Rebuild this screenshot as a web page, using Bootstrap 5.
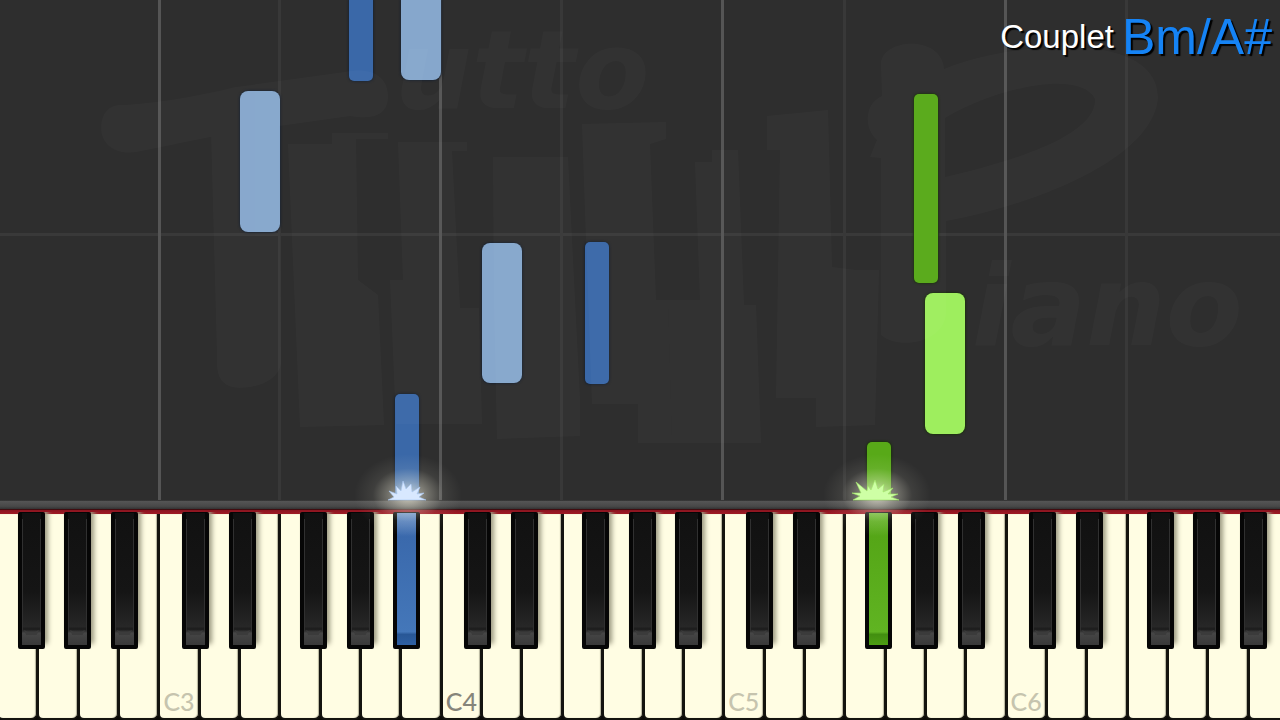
<!DOCTYPE html>
<html lang="en">
<head>
<meta charset="utf-8">
<meta name="viewport" content="width=device-width, initial-scale=1">
<title>Tutto Piano</title>
<link href="https://cdn.jsdelivr.net/npm/bootstrap@5.3.0/dist/css/bootstrap.min.css" rel="stylesheet">
<style>
  body { background: #2e2e2e; font-family: "Liberation Sans", Arial, sans-serif; }
  .roll { background: #2e2e2e; min-height: 300px; }
  .beat { top: 46.6%; height: 3px; background: #393939; }
  .lane { width: 3px; margin-left: -1px; background: #383838; }
  .lane.octave { width: 3px; margin-left: -1px; background: #555; }
  .note { border-radius: 8px; box-shadow: 0 0 2px 1px #1c2430; }
  .note.sharp { border-radius: 5px; }
  .note.cut-top { border-top-left-radius: 0; border-top-right-radius: 0; }
  .note.cut-bottom { border-bottom-left-radius: 0; border-bottom-right-radius: 0; }
  .left-hand { background: #86a7cc; }
  .left-hand.sharp { background: #3a68a8; }
  .right-hand { background: #9eee5e; box-shadow: 0 0 2px 1px #1d3010; }
  .right-hand.sharp { background: #58a918; }
  .chord { text-shadow: 2px 2px 1px #000; padding-top: 9px; }
  .part-name { font-size: 33px; line-height: 40px; color: #fff; }
  .chord-name { font-size: 50px; line-height: 56px; color: #1583f5; }
  .spark { width: 140px; height: 110px; margin-left: -70px; bottom: -36px; z-index: 4; pointer-events: none; }
  .rail { height: 9px; background: linear-gradient(#252525, #545454 15%, #484848 70%, #333); }
  .felt { height: 5px; background: linear-gradient(#1b0808, #8c1520 30%, #a01a25); }
  .keys { height: 206px; background: #0c0c08; }
  .white-keys { width: calc(100% + 11px); margin-left: -3px; }
  .white-key { flex: 1 1 0; min-width: 0; border: 1px solid #14140f; border-width: 0 1px 2px 2px; border-radius: 0 0 6px 6px; padding: 0 0 1px 3px; background: #fffde3; box-shadow: inset -1px 0 1px #b5b39c; font: 500 25px/32px Lato, sans-serif; color: #c6c4ae; }
  .white-key.middle { color: #86857a; }
  .black-key { top: -2px; width: 2.1%; height: 137px; border: solid #060606; border-width: 1px 4px 4px; border-radius: 2px; background: linear-gradient(#111, #151515 60%, #272727 86%, #1b1b1b 88%, #464646 91%, #393939); box-shadow: 3px -5px 5px #9b9981; clip-path: inset(0 -10px -1px -1px); z-index: 2; }
  .black-key::before { content: ""; position: absolute; inset: 6px 0 14px; border: 1px solid #303030; border-width: 0 1px; }
  .black-key::after { content: ""; position: absolute; left: 2px; right: 2px; bottom: 10px; height: 5px; background: #3b3b3b; clip-path: polygon(0 0, 25% 35%, 75% 35%, 100% 0, 85% 100%, 15% 100%); }
  .black-key.down-left { background: linear-gradient(#6b91c7, #3a69ac 18%, #4477b9 90%, #285796 92%, #2f60a2); box-shadow: none; }
  .black-key.down-right { background: linear-gradient(#69b52f, #55a617 18%, #60b422 90%, #428f10 92%, #4c9d13); box-shadow: none; }
  .down-left::before, .down-left::after, .down-right::before, .down-right::after { display: none; }
</style>
</head>
<body>
<main class="d-flex flex-column vh-100 overflow-hidden">
  <section class="roll position-relative flex-grow-1" id="roll" aria-label="Falling notes">
    <div class="beat position-absolute start-0 end-0"></div>
    <div id="notes"></div>
    <svg class="position-absolute top-0 start-0 w-100 h-100" viewBox="0 0 1280 500" aria-hidden="true" style="z-index:2">
      <g opacity=".018" fill="#fff" stroke-linecap="round" stroke-linejoin="round">
        <path d="M118 105C150 104 190 98 235 87L345 72C373 66 389 78 388 98C387 115 373 120 350 116L279 126L281 364C278 380 258 388 239 388C222 387 216 377 217 360L211 137L137 152C117 156 101 145 101 128C101 114 108 106 118 105Z"/>
        <path d="M288 144H332V133H388V139H356L358 280L378 295L384 425L300 427Z"/>
        <path d="M398 142H467V151H452L460 308H479L482 424H396L390 280H403Z"/>
        <path d="M493 157H568L572 240L580 400V436L497 439L494 308Z"/>
        <path d="M582 124L666 122V139L650 144L656 300H668L672 443H638V404H592L586 240Z"/>
        <path d="M695 162H712V150H738L744 305H756L761 443H672L668 300H700Z"/>
        <path d="M767 116L828 110L832 267L856 270H879L875 425L816 427V398H776L780 150H767Z"/>
        <path fill-rule="evenodd" d="M881 65C880 38 942 34 944 69C1010 42 1158 28 1158 98C1153 158 1038 204 946 221V312C946 342 900 351 881 335V158L870 157L877 140C863 128 865 103 882 96ZM945 118V177C1010 162 1097 136 1095 99C1081 69 997 87 945 118Z"/>
        <text x="395" y="108" font-family="DejaVu Sans" font-weight="bold" font-style="italic" font-size="108">utto</text>
        <text x="972" y="345" font-family="DejaVu Sans" font-weight="bold" font-style="italic" font-size="112">iano</text>
      </g>
    </svg>
    <header class="chord position-absolute top-0 end-0 d-flex align-items-center gap-2 pe-2" style="z-index:3">
      <span class="part-name">Couplet</span><span class="chord-name">Bm/A#</span>
    </header>
  </section>
  <div class="rail flex-shrink-0 position-relative"></div>
  <div class="felt flex-shrink-0"></div>
  <section class="keys position-relative flex-shrink-0" id="keys" aria-label="Piano keyboard">
    <div class="white-keys d-flex h-100" id="whites"></div>
  </section>
</main>
<script src="https://cdn.jsdelivr.net/npm/bootstrap@5.3.0/dist/js/bootstrap.bundle.min.js"></script>
<script>
  // Horizontal values use a 1280-unit keyboard, vertical ones a 500-unit time window.
  const px = v => v / 12.8 + '%', py = v => v / 5 + '%';
  const roll = document.getElementById('roll'), keys = document.getElementById('keys');
  const add = (parent, tag, cls) => {
    const el = document.createElement(tag);
    el.className = cls;
    return parent.appendChild(el);
  };

  [[159, 1], [279, 0], [440, 1], [561, 0], [722, 1], [844, 0], [1005, 1], [1126, 0]].forEach(([x, octave]) => {
    const lane = add(document.getElementById('notes'), 'div', 'lane position-absolute top-0 bottom-0' + (octave ? ' octave' : ''));
    lane.style.left = px(x);
  });

  [
    [349, 0, 24, 81, 'left-hand sharp cut-top'], [401, 0, 40, 80, 'left-hand cut-top'],
    [240, 91, 40, 141, 'left-hand'], [482, 243, 40, 140, 'left-hand'],
    [585, 242, 24, 142, 'left-hand sharp'], [395, 394, 24, 106, 'left-hand sharp cut-bottom'],
    [914, 94, 24, 189, 'right-hand sharp'], [925, 293, 40, 141, 'right-hand'],
    [867, 442, 24, 58, 'right-hand sharp cut-bottom']
  ].forEach(([x, y, w, h, kind]) => {
    const n = add(document.getElementById('notes'), 'div', 'note position-absolute ' + kind);
    Object.assign(n.style, { left: px(x), top: py(y), width: px(w), height: py(h) });
  });

  // Bursts where a note meets its key
  [[407, '#d8e8ff', '#a9c8f2', 'b', 'M51 74L57 71L52 65L60 68L59 60L64 65L66 55L69 63L74 58L75 66L83 61L80 68L87 67L82 71L89 74Z'],
   [876, '#ceffa5', '#9fe566', 'g', 'M47 74L54 70L46 67L55 67L50 56L61 65L62 60L65 64L69 54L72 63L78 58L77 66L87 62L82 68L92 68L85 71L93 74Z']
  ].forEach(([x, core, edge, id, d]) => {
    const s = add(roll, 'div', 'spark position-absolute');
    s.style.left = px(x);
    s.innerHTML = `<svg viewBox="0 0 140 110" width="140" height="110" class="d-block" aria-hidden="true">
      <defs><radialGradient id="glow-${id}"><stop offset="0" stop-color="#fffce8" stop-opacity=".72"/><stop offset=".35" stop-color="#fffce8" stop-opacity=".34"/><stop offset=".65" stop-color="#fffce8" stop-opacity=".08"/><stop offset="1" stop-color="#fffce8" stop-opacity="0"/></radialGradient></defs>
      <ellipse cx="71" cy="69" rx="54" ry="41" fill="url(#glow-${id})"/>
      <path d="${d}" fill="${core}" stroke="${edge}" stroke-width=".6"/></svg>`;
  });

  const names = 'FGABCDE';
  let octave = 2;
  for (let i = 0; i < 32; i++) {
    const name = names[i % 7];
    const k = add(document.getElementById('whites'), 'button', 'white-key d-flex align-items-end');
    k.type = 'button';
    if (name === 'C') {
      octave++;
      k.textContent = 'C' + octave;
      if (octave === 4) k.classList.add('middle');
    }
    k.setAttribute('aria-label', name + octave);
  }
  [19, 65, 112, 183, 230, 301, 348, 394, 465, 512, 583, 630, 676, 747, 794, 866, 912, 959, 1030, 1077, 1148, 1194, 1241].forEach(x => {
    const k = add(keys, 'button', 'black-key position-absolute p-0' + (x === 394 ? ' down-left' : x === 866 ? ' down-right' : ''));
    k.type = 'button';
    k.setAttribute('aria-label', 'Black key');
    k.style.left = px(x - 1);
  });
</script>
</body>
</html>
